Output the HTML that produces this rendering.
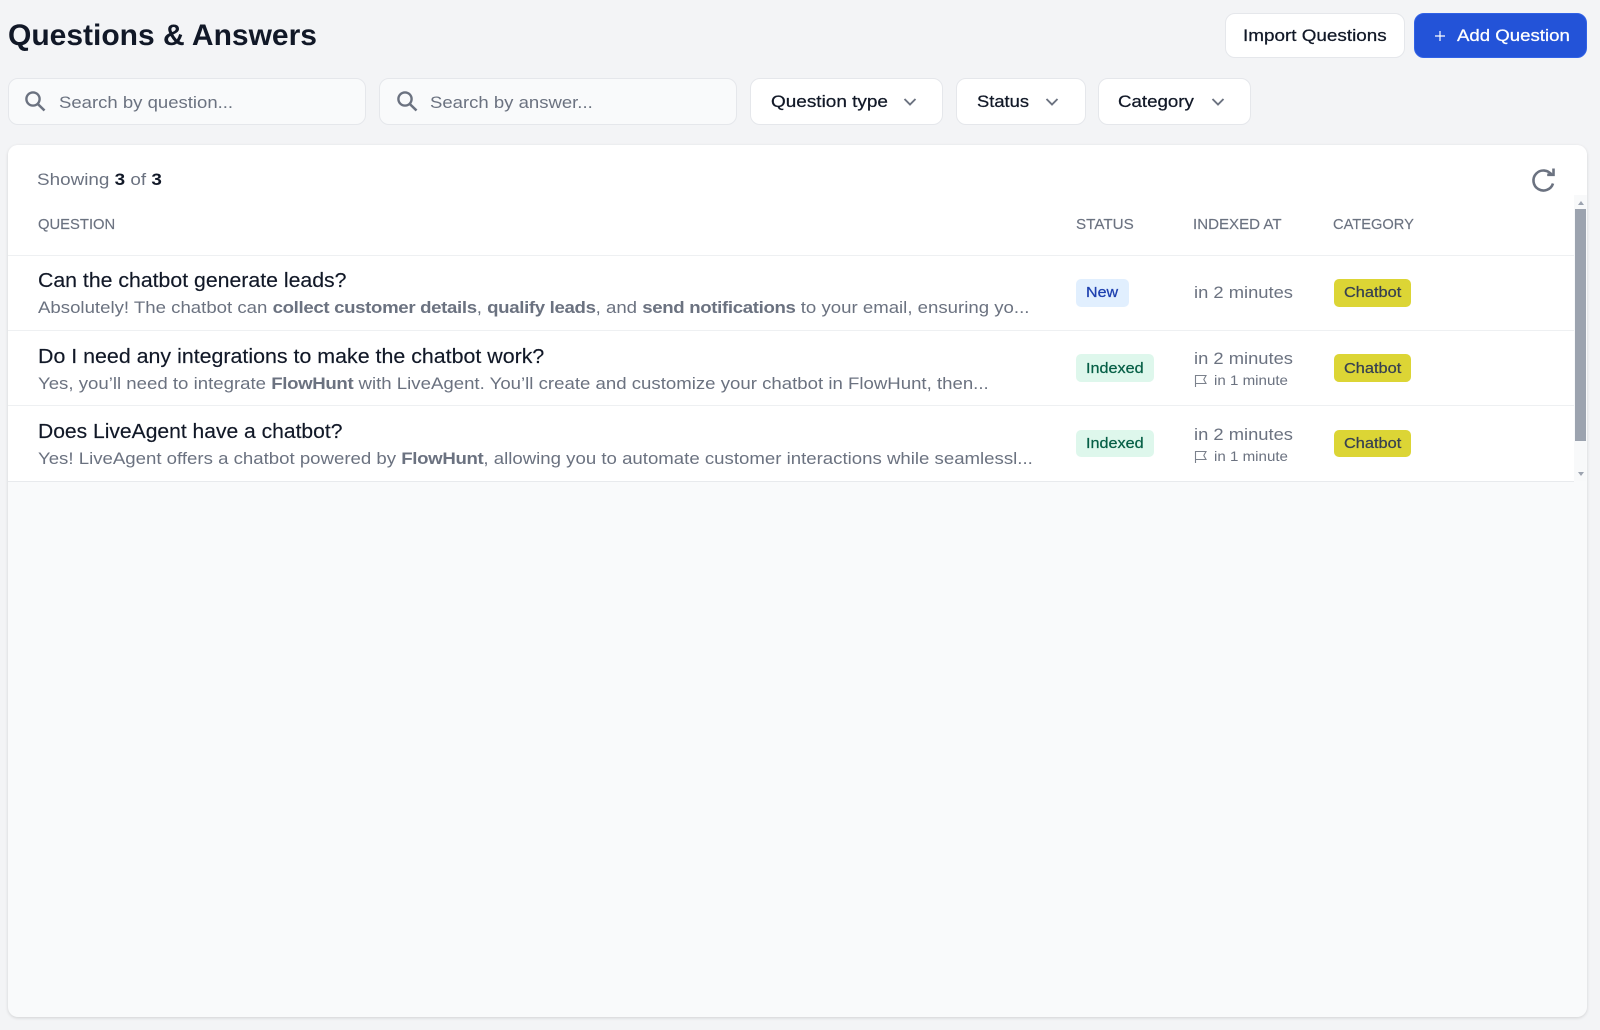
<!DOCTYPE html>
<html lang="en"><head><meta charset="utf-8"><title>Questions &amp; Answers</title>
<style>
*{box-sizing:border-box}
html,body{margin:0;padding:0;width:1600px;height:1030px;overflow:hidden;background:#f3f4f6;font-family:"Liberation Sans",Arial,sans-serif;color:#111827}
.t{position:absolute;white-space:nowrap;height:20px;line-height:20px;transform-origin:0 50%;font-size:17px}
.b{position:absolute;border:1px solid #e5e7eb;border-radius:10px;background:#fff}
.s{background:#f9fafb}
.g{color:#6b7280}
.m{-webkit-text-stroke:.25px currentColor}
.h{font-size:14.5px;color:#6b7280;-webkit-text-stroke:.15px currentColor}
.q{font-size:20px;color:#111827;-webkit-text-stroke:.15px currentColor}
.a{color:#6b7280;transform:scaleX(1.095)}
.a b{font-weight:bold;letter-spacing:-.3px}
.p{position:absolute;border-radius:5px}
.l{position:absolute;left:8px;width:1566px;height:1px;background:#eef0f2}
svg{position:absolute;display:block}
</style></head><body>
<div class="t" style="left:8px;top:26px;font-size:30px;line-height:20px;font-weight:bold;color:#111827">Questions &amp; Answers</div>

<button class="b" style="left:1225px;top:13px;width:180px;height:45px;padding:0"></button>
<div class="t m" style="left:1243px;top:26px;transform:scaleX(1.11)">Import Questions</div>
<button class="b" style="left:1414px;top:13px;width:173px;height:45px;padding:0;background:#2353d8;border-color:#3162e6"></button>
<svg style="left:1433px;top:29px" width="14" height="14" viewBox="0 0 14 14"><path d="M7 2v10M2 7h10" stroke="#fff" stroke-width="1.2" fill="none"/></svg>
<div class="t m" style="left:1457px;top:26px;color:#fff;transform:scaleX(1.095)">Add Question</div>

<div class="b s" style="left:8px;top:78px;width:358px;height:47px"></div>
<svg style="left:20px;top:88px" width="30" height="28" viewBox="0 0 30 28"><circle cx="13" cy="11" r="6.6" fill="none" stroke="#6b7280" stroke-width="2.4"/><path d="M17.8 16 24.500 22.500" stroke="#6b7280" stroke-width="2.6" fill="none"/></svg>
<div class="t g" style="left:58.5px;top:92.5px;transform:scaleX(1.09)">Search by question...</div>

<div class="b s" style="left:379px;top:78px;width:358px;height:47px"></div>
<svg style="left:391.5px;top:88px" width="30" height="28" viewBox="0 0 30 28"><circle cx="13" cy="11" r="6.6" fill="none" stroke="#6b7280" stroke-width="2.4"/><path d="M17.8 16 24.500 22.500" stroke="#6b7280" stroke-width="2.6" fill="none"/></svg>
<div class="t g" style="left:429.5px;top:92.5px;transform:scaleX(1.09)">Search by answer...</div>

<div class="b" style="left:750px;top:78px;width:193px;height:47px"></div>
<div class="t m" style="left:770.5px;top:92px;transform:scaleX(1.115)">Question type</div>
<svg style="left:903px;top:97px" width="14" height="10" viewBox="0 0 14 10"><path d="M1.5 2 7 7.500 12.500 2" fill="none" stroke="#6b7280" stroke-width="1.9"/></svg>

<div class="b" style="left:955.5px;top:78px;width:130px;height:47px"></div>
<div class="t m" style="left:976.5px;top:92px;transform:scaleX(1.08)">Status</div>
<svg style="left:1045px;top:97px" width="14" height="10" viewBox="0 0 14 10"><path d="M1.5 2 7 7.500 12.500 2" fill="none" stroke="#6b7280" stroke-width="1.9"/></svg>

<div class="b" style="left:1098px;top:78px;width:153px;height:47px"></div>
<div class="t m" style="left:1118px;top:92px;transform:scaleX(1.1)">Category</div>
<svg style="left:1211px;top:97px" width="14" height="10" viewBox="0 0 14 10"><path d="M1.5 2 7 7.500 12.500 2" fill="none" stroke="#6b7280" stroke-width="1.9"/></svg>

<div style="position:absolute;left:8px;top:145px;width:1579px;height:872px;background:#f9fafb;border-radius:10px;box-shadow:0 1px 3px rgba(0,0,0,.14);overflow:hidden">
  <div style="position:absolute;left:0;top:0;width:1566px;height:336px;background:#fff"></div>
  <div style="position:absolute;left:1566px;top:0;width:13px;height:50px;background:#fff"></div>
  <div style="position:absolute;left:1566px;top:50px;width:12px;height:286px;background:#f8f9fa"></div>
  <div style="position:absolute;left:1567px;top:64px;width:11px;height:232px;background:#9ca3af"></div>
</div>
<svg style="left:1576px;top:200px" width="10" height="6" viewBox="0 0 10 6"><path d="M5 1 8 5H2z" fill="#9ca3af"/></svg>
<svg style="left:1576px;top:471px" width="10" height="6" viewBox="0 0 10 6"><path d="M5 5 8 1H2z" fill="#9ca3af"/></svg>
<div class="l" style="top:255px"></div><div class="l" style="top:330px"></div><div class="l" style="top:405px"></div><div class="l" style="top:481px;background:#e8eaed"></div>

<div class="t g" style="left:37px;top:170px;transform:scaleX(1.11)">Showing <b style="color:#111827">3</b> of <b style="color:#111827">3</b></div>
<svg style="left:1525px;top:160px" width="40" height="40" viewBox="0 0 40 40"><path d="M26.800 15A10 10 0 1 0 28 23.500" fill="none" stroke="#6b7280" stroke-width="2.600"/><path d="M28.500 8.500v6.300h-6.300" fill="none" stroke="#6b7280" stroke-width="2.600"/></svg>

<div class="t h" style="left:37.500px;top:215px;transform:scaleX(1.02)">QUESTION</div>
<div class="t h" style="left:1076px;top:215px;transform:scaleX(1.05)">STATUS</div>
<div class="t h" style="left:1193px;top:215px;transform:scaleX(1.04)">INDEXED AT</div>
<div class="t h" style="left:1333px;top:215px;transform:scaleX(1.01)">CATEGORY</div>

<div class="t q" style="left:37.500px;top:270.5px;transform:scaleX(1.063)">Can the chatbot generate leads?</div>
<div class="t a" style="left:37.500px;top:298px">Absolutely! The chatbot can <b>collect customer details</b>, <b>qualify leads</b>, and <b>send notifications</b> to your email, ensuring yo...</div>
<div class="p" style="left:1076px;top:279px;width:53px;height:28px;background:#e1effe"></div>
<div class="t m" style="left:1086px;top:282.5px;font-size:15px;color:#1e40af;transform:scaleX(1.07)">New</div>
<div class="t g" style="left:1193.500px;top:282.5px;transform:scaleX(1.08)">in 2 minutes</div>
<div class="p" style="left:1334px;top:279px;width:77px;height:28px;background:#dcd535"></div>
<div class="t m" style="left:1343.500px;top:282.5px;font-size:15px;color:#374151;transform:scaleX(1.09)">Chatbot</div>

<div class="t q" style="left:37.500px;top:347px;transform:scaleX(1.069)">Do I need any integrations to make the chatbot work?</div>
<div class="t a" style="left:37.500px;top:374px">Yes, you’ll need to integrate <b>FlowHunt</b> with LiveAgent. You’ll create and customize your chatbot in FlowHunt, then...</div>
<div class="p" style="left:1076px;top:354px;width:78px;height:28px;background:#def7ec"></div>
<div class="t m" style="left:1086px;top:358.500px;font-size:15px;color:#065f46;transform:scaleX(1.08)">Indexed</div>
<div class="t g" style="left:1193.500px;top:349px;transform:scaleX(1.08)">in 2 minutes</div>
<svg style="left:1194px;top:374px" width="14" height="15" viewBox="0 0 14 15"><path d="M1.500 13V1.500H12L9.800 5.500 12 9.500H1.500" fill="none" stroke="#7b818c" stroke-width="1.100"/></svg>
<div class="t g" style="left:1213.500px;top:370px;font-size:14px;transform:scaleX(1.08)">in 1 minute</div>
<div class="p" style="left:1334px;top:354px;width:77px;height:28px;background:#dcd535"></div>
<div class="t m" style="left:1343.500px;top:358.500px;font-size:15px;color:#374151;transform:scaleX(1.09)">Chatbot</div>

<div class="t q" style="left:37.500px;top:422px;transform:scaleX(1.053)">Does LiveAgent have a chatbot?</div>
<div class="t a" style="left:37.500px;top:449px">Yes! LiveAgent offers a chatbot powered by <b>FlowHunt</b>, allowing you to automate customer interactions while seamlessl...</div>
<div class="p" style="left:1076px;top:430px;width:78px;height:27px;background:#def7ec"></div>
<div class="t m" style="left:1086px;top:434px;font-size:15px;color:#065f46;transform:scaleX(1.08)">Indexed</div>
<div class="t g" style="left:1193.500px;top:425px;transform:scaleX(1.08)">in 2 minutes</div>
<svg style="left:1194px;top:450px" width="14" height="15" viewBox="0 0 14 15"><path d="M1.500 13V1.500H12L9.800 5.500 12 9.500H1.500" fill="none" stroke="#7b818c" stroke-width="1.100"/></svg>
<div class="t g" style="left:1213.500px;top:446px;font-size:14px;transform:scaleX(1.08)">in 1 minute</div>
<div class="p" style="left:1334px;top:430px;width:77px;height:27px;background:#dcd535"></div>
<div class="t m" style="left:1343.500px;top:434px;font-size:15px;color:#374151;transform:scaleX(1.09)">Chatbot</div>
</body></html>
